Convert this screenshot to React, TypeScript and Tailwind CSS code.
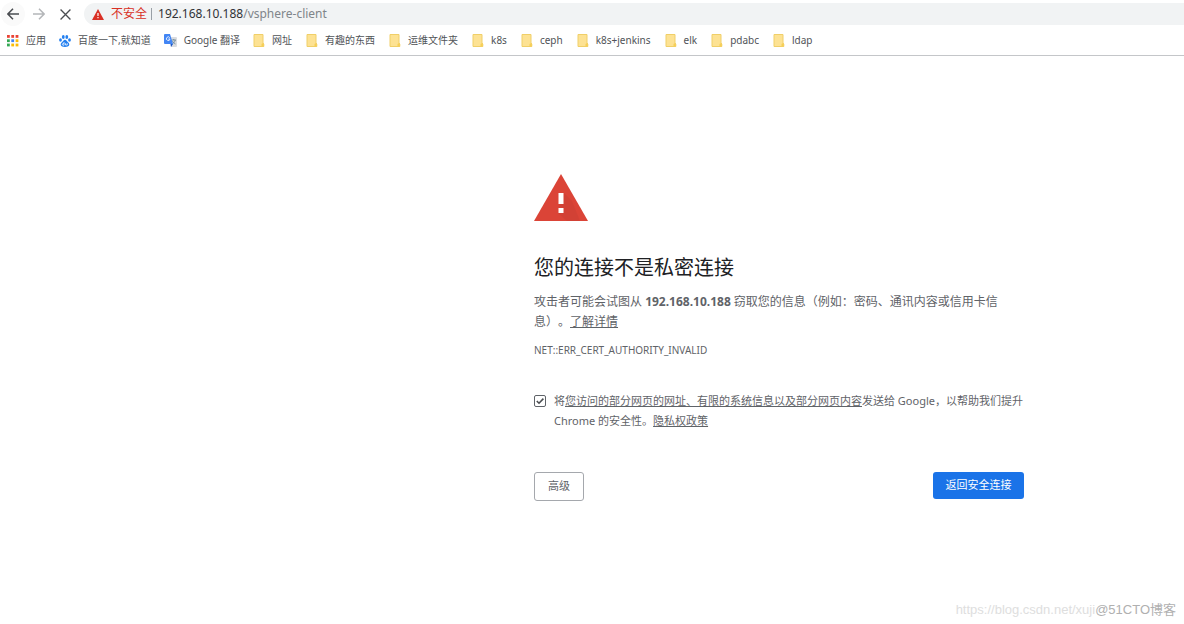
import React from "react";

const folders = ["网址", "有趣的东西", "运维文件夹", "k8s", "ceph", "k8s+jenkins", "elk", "pdabc", "ldap"];

const dots = ["#ea4335", "#ea4335", "#ea4335", "#34a853", "#4285f4", "#fbbc04", "#34a853", "#fbbc04", "#fbbc04"];

function AppsIcon() {
  return (
    <svg width="12" height="12" viewBox="0 0 12 12" aria-hidden="true">
      {dots.map((fill, i) => (
        <rect key={i} x={(i % 3) * 4.3} y={Math.floor(i / 3) * 4.3} width="2.8" height="2.8" fill={fill} />
      ))}
    </svg>
  );
}

function PawIcon() {
  return (
    <svg width="12" height="12" viewBox="0 0 24 24" fill="#2480f0" aria-hidden="true">
      <ellipse cx="8.6" cy="4" rx="2.8" ry="3.8" />
      <ellipse cx="15.6" cy="4" rx="2.8" ry="3.8" />
      <ellipse cx="3" cy="10" rx="2.8" ry="3.6" />
      <ellipse cx="21" cy="10" rx="2.8" ry="3.6" />
      <path d="M12 9.5c-3 0-4 3-6 5-2.500 2.500-3 4-2.300 6.200C4.600 23.600 7.500 24 12 24s7.400-.4 8.300-3.300c.7-2.200.2-3.700-2.300-6.200-2-2-3-5-6-5z" />
      <path d="M10 14v6.500H8.500a1.700 1.700 0 0 1 0-3.500H10M13 16.500v3.500h3.500v-3.500" fill="none" stroke="#fff" strokeWidth="1.500" />
    </svg>
  );
}

function TranslateIcon() {
  return (
    <svg width="13" height="13" viewBox="0 0 26 26" aria-hidden="true">
      <path d="M10 6h14a2 2 0 0 1 2 2v16a2 2 0 0 1-2 2H14z" fill="#dadce0" />
      <path d="M15 12h9M19.500 10v2M22.500 12c-1 4-3 6-6 8M17 14c1 3 3 5 6 6" fill="none" stroke="#607d8b" strokeWidth="1.500" />
      <path d="M2 0h10l6 20H2a2 2 0 0 1-2-2V2a2 2 0 0 1 2-2z" fill="#4285f4" />
      <path d="M13 20h5l-4 6z" fill="#1a56c4" />
      <path d="M11.500 7.500A3.600 3.600 0 1 0 12 10H8.500" fill="none" stroke="#fff" strokeWidth="1.700" />
    </svg>
  );
}

function FolderIcon() {
  return (
    <svg width="12" height="13" viewBox="0 0 12 13" aria-hidden="true">
      <path d="M1 .5h9v8.500l.8 1v2.500H1z" fill="#fde293" stroke="#f0cf68" />
      <path d="M8.500 12.500V10l1.500-1 .8 1v2.500z" fill="#f6cf57" />
    </svg>
  );
}

function Bookmark({ icon, label }: { icon: React.ReactNode; label: string }) {
  return (
    <a href="#" className="flex items-center gap-[7px] whitespace-nowrap">
      {icon}
      {label}
    </a>
  );
}

export default function App() {
  return (
    <div className="relative flex min-h-screen flex-col bg-white font-['Noto_Sans','Noto_Sans_CJK_SC',sans-serif] text-[#5f6368] [text-spacing-trim:space-all]">
      <header className="border-b border-[#c4c6c9]">
        <div className="flex h-7 items-center">
          <nav aria-label="导航" className="flex w-[84px] shrink-0 items-center pl-px">
            <button aria-label="后退" className="flex size-6 items-center justify-center rounded-full bg-[#fafafa]">
              <svg width="12" height="12" viewBox="0 0 12 12" fill="none" stroke="#4a4d51" strokeWidth="1.500">
                <path d="M12 6H1M6 .8.9 6 6 11.200" />
              </svg>
            </button>
            <button aria-label="前进" className="flex w-7 justify-center">
              <svg width="12" height="12" viewBox="0 0 12 12" fill="none" stroke="#b4b6b9" strokeWidth="1.500">
                <path d="M0 6h11M6 .8 11.100 6 6 11.200" />
              </svg>
            </button>
            <button aria-label="停止" className="flex w-6 justify-center">
              <svg width="11" height="11" viewBox="0 0 10 10" fill="none" stroke="#4a4d51" strokeWidth="1.200">
                <path d="m.5.5 9 9M9.500.5l-9 9" />
              </svg>
            </button>
          </nav>
          <div className="flex h-[22px] min-w-0 flex-1 items-center rounded-l-full bg-[#f1f3f4] pl-2 text-xs">
            <svg width="12" height="11" viewBox="0 0 12 11" aria-hidden="true">
              <path d="M6 0l6 11H0z" fill="#d93025" />
              <path d="M5.400 4h1.200v3H5.400zM5.400 8h1.200v1.200H5.400z" fill="#fff" />
            </svg>
            <span className="ml-[7px] text-[#d93025]">不安全</span>
            <span className="mr-[6px] ml-1 h-3 w-px bg-[#9aa0a6]" />
            <span className="text-[#303236]">192.168.10.188</span>
            <span className="text-[#80858a]">/vsphere-client</span>
          </div>
        </div>
        <nav aria-label="书签" className="flex h-[27px] items-center gap-[13px] pb-[2px] pl-[7px] text-[10px] text-[#505357]">
          <Bookmark icon={<AppsIcon />} label="应用" />
          <Bookmark icon={<PawIcon />} label="百度一下,就知道" />
          <Bookmark icon={<TranslateIcon />} label="Google 翻译" />
          <div className="flex items-center gap-[14px]">
            {folders.map((f) => (
              <Bookmark key={f} icon={<FolderIcon />} label={f} />
            ))}
          </div>
        </nav>
      </header>

      <main className="pt-[118px] pl-[534px]">
        <div className="max-w-[490px]">
          <svg width="54" height="47" viewBox="0 0 54 47" aria-hidden="true">
            <path d="M27 0l27 47H0z" fill="#db4437" />
            <path d="M30 19l8 8 8 20H33L24 39z" fill="#c53e33" opacity=".4" />
            <path d="M24.500 19h5v11h-5zM24.500 34h5v5h-5z" fill="#fff" />
          </svg>
          <h1 className="mt-[31px] text-[20px] leading-8 text-[#202124]">您的连接不是私密连接</h1>
          <p className="mt-2 pr-4 text-xs leading-5">
            攻击者可能会试图从 <strong>192.168.10.188</strong> 窃取您的信息（例如：密码、通讯内容或信用卡信息）。<a href="#" className="underline">了解详情</a>
          </p>
          <p className="mt-2 text-[10px] leading-5">NET::ERR_CERT_AUTHORITY_INVALID</p>
          <div className="mt-[31px] flex gap-2">
            <span className="relative mt-1 size-3 shrink-0">
              <input id="report" type="checkbox" defaultChecked className="peer block size-3 appearance-none rounded-[2px] border border-[#5f6368] bg-white" />
              <svg className="pointer-events-none absolute inset-0 hidden peer-checked:block" width="12" height="12" viewBox="0 0 12 12" fill="none" stroke="#4a4d51" strokeWidth="1.600">
                <path d="M2.800 6l2.200 2.200 4.400-4.600" />
              </svg>
            </span>
            <label htmlFor="report" className="text-[11px] leading-5">
              将<a href="#" className="underline">您访问的部分网页的网址、有限的系统信息以及部分网页内容</a>发送给 Google，以帮助我们提升 Chrome 的安全性。<a href="#" className="underline">隐私权政策</a>
            </label>
          </div>
          <div className="mt-[41px] flex items-start justify-between text-[11px]">
            <button className="h-[29px] w-[50px] rounded-[3px] border border-[#a5a8ad]">高级</button>
            <button className="h-[27px] w-[91px] rounded-[3px] bg-[#1a73e8] text-white">返回安全连接</button>
          </div>
        </div>
      </main>

      <div className="absolute right-2 bottom-1 flex items-center font-['Liberation_Sans','Noto_Sans_CJK_SC',sans-serif] text-[13px] leading-5">
        <span className="text-[#dedede]">https://blog.csdn.net/xuji</span>
        <span className="text-[#b0b0b0]">@51CTO博客</span>
      </div>
    </div>
  );
}
